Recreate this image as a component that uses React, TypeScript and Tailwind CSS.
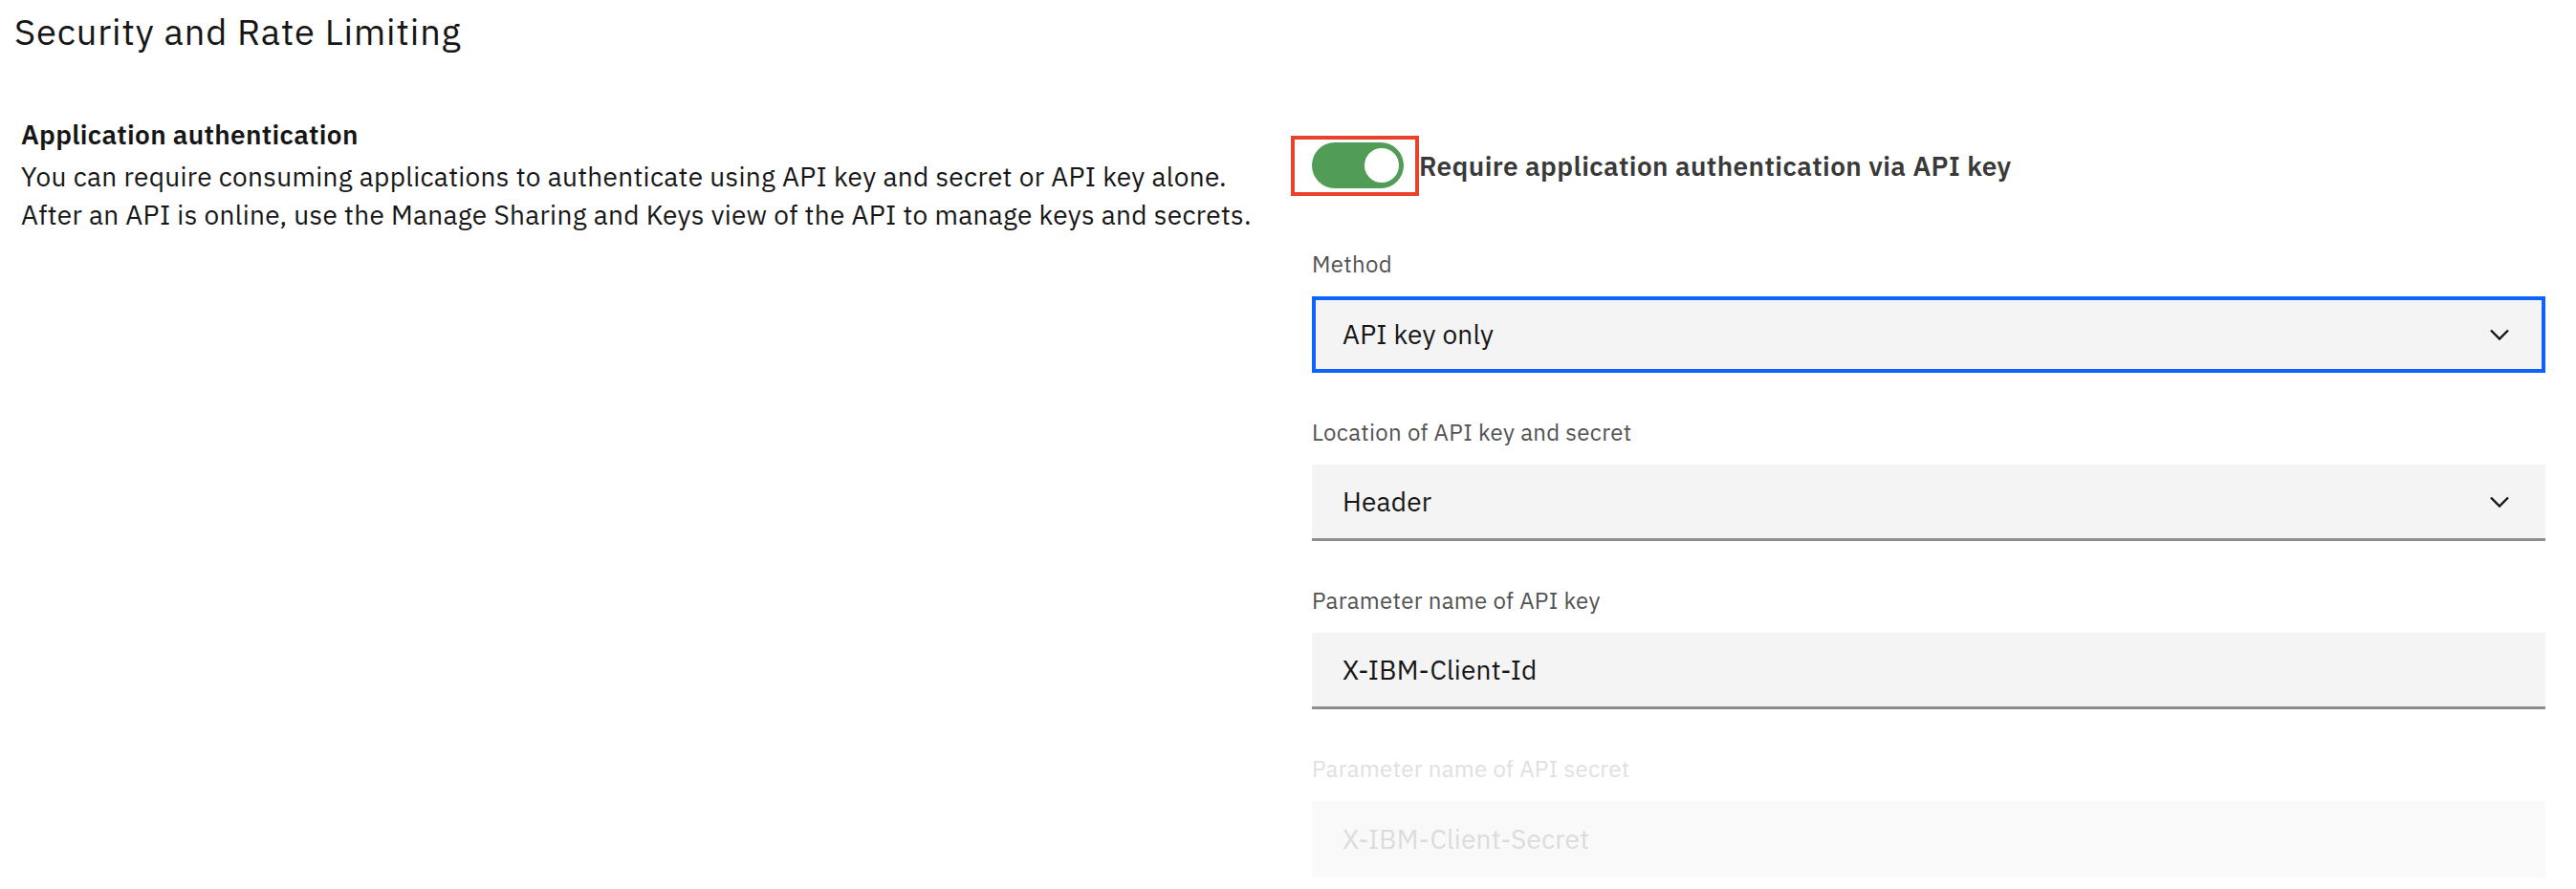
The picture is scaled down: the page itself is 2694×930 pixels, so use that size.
import { ReactNode } from 'react'

// Chevron used by the two dropdowns
const Chevron = () => (
  <svg width="20" height="12" viewBox="0 0 20 12" fill="none" aria-hidden="true">
    <path d="M1 1.5 L10 10.5 L19 1.5" stroke="#161616" strokeWidth="2.4" />
  </svg>
)

interface FieldProps {
  label: string
  children: ReactNode
  disabled?: boolean
}

const Field = ({ label, children, disabled }: FieldProps) => (
  <div className="flex flex-col">
    <label
      className={`text-[24px] leading-[32px] tracking-[0.3px] mb-[18px] ${disabled ? 'text-[#e0e0e0]' : 'text-[#525252]'}`}
    >
      {label}
    </label>
    {children}
  </div>
)

export default function App() {
  return (
    <div className="min-h-[930px] bg-white font-['IBM_Plex_Sans','Roboto',sans-serif] text-[#161616]">
      <h1 className="pt-[9px] pl-[15px] text-[38px] leading-[48px] tracking-[0.9px] font-normal">
        Security and Rate Limiting
      </h1>

      <div className="flex">
        {/* Left: description */}
        <div className="w-[1372px] shrink-0 pl-[22px] pt-[64px]">
          <h2 className="text-[28px] leading-[40px] tracking-[0.3px] font-semibold">Application authentication</h2>
          <p className="mt-[4px] text-[28px] leading-[40px] tracking-[0.32px] whitespace-nowrap">
            <span className="block">
              You can require consuming applications to authenticate using API key and secret or API key alone.
            </span>
            <span className="block">
              After an API is online, use the Manage Sharing and Keys view of the API to manage keys and secrets.
            </span>
          </p>
        </div>

        {/* Right: form */}
        <div className="flex-1 pr-[32px] pt-[85px]">
          <div className="flex items-center h-[63px]">
            <div className="-ml-[22px] border-4 border-[#e8432a] pl-[18px] pr-[12px] pt-[3px] pb-[4px]">
              <button
                type="button"
                aria-pressed="true"
                className="flex items-center justify-end w-[96px] h-[48px] rounded-full bg-[#519d58] pr-[5px]"
              >
                <span className="block w-[36px] h-[36px] rounded-full bg-white" />
              </button>
            </div>
            <span className="text-[28px] font-semibold tracking-[0.4px] text-[#393939]">
              Require application authentication via API key
            </span>
          </div>

          <div className="mt-[55px] flex flex-col gap-[46px]">
            <Field label="Method">
              <div className="flex items-center justify-between h-[80px] bg-[#f4f4f4] ring-4 ring-inset ring-[#0f62fe] pl-[32px] pr-[38px] text-[28px] tracking-[0.2px]">
                <span>API key only</span>
                <Chevron />
              </div>
            </Field>

            <Field label="Location of API key and secret">
              <div className="flex items-center justify-between h-[80px] bg-[#f4f4f4] border-b-[3px] border-[#8d8d8d] pl-[32px] pr-[38px] text-[28px] tracking-[0.2px]">
                <span>Header</span>
                <Chevron />
              </div>
            </Field>

            <Field label="Parameter name of API key">
              <div className="flex items-center h-[80px] bg-[#f4f4f4] border-b-[3px] border-[#8d8d8d] pl-[32px] text-[28px] tracking-[0.2px]">
                X-IBM-Client-Id
              </div>
            </Field>

            <Field label="Parameter name of API secret" disabled>
              <div className="flex items-center h-[80px] bg-[#f9f9f9] pl-[32px] text-[28px] tracking-[0.2px] text-[#dcdcdc]">
                X-IBM-Client-Secret
              </div>
            </Field>
          </div>
        </div>
      </div>
    </div>
  )
}
